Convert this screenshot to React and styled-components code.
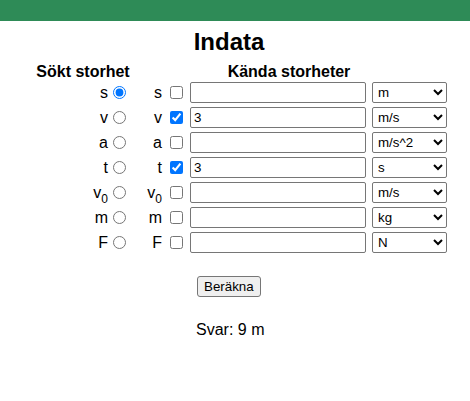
import React from "react";
import styled, { createGlobalStyle } from "styled-components";

const GlobalStyle = createGlobalStyle`
  body {
    margin: 0;
    background: #fff;
    color: #000;
    font-family: "Liberation Sans", Arial, sans-serif;
  }
`;

const quantities = [
  { name: "s", known: false, value: "", unit: "m", units: ["m", "km", "cm"] },
  { name: "v", known: true, value: "3", unit: "m/s", units: ["m/s", "km/h"] },
  { name: "a", known: false, value: "", unit: "m/s^2", units: ["m/s^2"] },
  { name: "t", known: true, value: "3", unit: "s", units: ["s", "min", "h"] },
  { name: "v", sub: "0", known: false, value: "", unit: "m/s", units: ["m/s", "km/h"] },
  { name: "m", known: false, value: "", unit: "kg", units: ["kg", "g"] },
  { name: "F", known: false, value: "", unit: "N", units: ["N", "kN"] },
];

function Label({ q }) {
  return (
    <Symbol>
      {q.name}
      {q.sub && <Sub>{q.sub}</Sub>}
    </Symbol>
  );
}

function App() {
  return (
    <>
      <GlobalStyle />
      <TopBar />
      <Title>Indata</Title>
      <Form>
        <HeadCell>Sökt storhet</HeadCell>
        <HeadCell span={3}>Kända storheter</HeadCell>
        {quantities.map((q, i) => (
          <React.Fragment key={i}>
            <SoughtCell>
              <Label q={q} />
              <Radio type="radio" name="sokt" defaultChecked={i === 0} />
            </SoughtCell>
            <KnownCell>
              <Label q={q} />
              <Check type="checkbox" defaultChecked={q.known} />
            </KnownCell>
            <InputCell>
              <ValueInput type="text" defaultValue={q.value} />
            </InputCell>
            <InputCell>
              <UnitSelect defaultValue={q.unit}>
                {q.units.map((u) => (
                  <option key={u} value={u}>
                    {u}
                  </option>
                ))}
              </UnitSelect>
            </InputCell>
          </React.Fragment>
        ))}
      </Form>
      <Actions>
        <CalcButton type="button">Beräkna</CalcButton>
        <Answer>Svar: 9 m</Answer>
      </Actions>
    </>
  );
}

const TopBar = styled.div`
  height: 21px;
  background: #2e8b57;
`;

const Title = styled.h2`
  width: 458px;
  margin: 7px 0 8px;
  font-size: 24px;
  line-height: 28px;
  font-weight: bold;
  text-align: center;
`;

const Form = styled.div`
  display: grid;
  grid-template-columns: 96px 59px 182px 75px;
  grid-template-rows: 16px repeat(7, 25px);
  margin-left: 35px;
  width: max-content;
`;

const HeadCell = styled.div`
  grid-column: span ${(p) => p.span || 1};
  font-size: 16px;
  line-height: 16px;
  font-weight: bold;
  text-align: center;
  white-space: nowrap;
`;

const SoughtCell = styled.div`
  display: flex;
  align-items: center;
  justify-content: flex-end;
  padding-right: 5px;
  font-size: 16px;
`;

const KnownCell = styled(SoughtCell)`
  padding-right: 7px;
`;

const InputCell = styled.div`
  display: flex;
  align-items: center;
`;

const Symbol = styled.span`
  line-height: 18px;
  white-space: nowrap;
`;

const Sub = styled.sub`
  font-size: 12px;
  line-height: 0;
  vertical-align: -5px;
`;

const Radio = styled.input`
  width: 13px;
  height: 13px;
  margin: 0 0 0 5px;
`;

const Check = styled.input`
  width: 13px;
  height: 13px;
  margin: 0 0 0 8px;
`;

const ValueInput = styled.input`
  box-sizing: border-box;
  width: 176px;
  height: 21px;
  padding: 1px 3px;
  border: 1px solid #767676;
  border-radius: 2px;
  font-family: "Liberation Sans", Arial, sans-serif;
  font-size: 13.333px;
  color: #000;
`;

const UnitSelect = styled.select`
  box-sizing: border-box;
  width: 75px;
  height: 21px;
  padding: 0 0 0 1px;
  border: 1px solid #767676;
  border-radius: 2px;
  background: #fff;
  font-family: "Liberation Sans", Arial, sans-serif;
  font-size: 13.333px;
  color: #000;
`;

const Actions = styled.div`
  display: flex;
  flex-direction: column;
  align-items: flex-start;
  padding-left: 196px;
  margin-top: 21px;
`;

const CalcButton = styled.button`
  box-sizing: border-box;
  height: 21px;
  margin-left: 1px;
  padding: 1px 6px;
  border: 1px solid #767676;
  border-radius: 3px;
  background: #efefef;
  font-family: "Liberation Sans", Arial, sans-serif;
  font-size: 13.333px;
  color: #000;
`;

const Answer = styled.div`
  margin-top: 24px;
  font-size: 16px;
  line-height: 18px;
`;

export default App;
